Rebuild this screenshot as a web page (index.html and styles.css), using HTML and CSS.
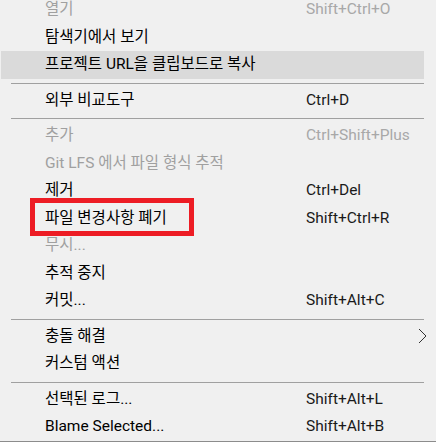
FILE: index.html
```html
<!DOCTYPE html>
<html lang="ko">
<head>
  <meta charset="UTF-8"/>
  <title>Context Menu</title>
  <link rel="stylesheet" href="styles.css">
</head>
<body>
  <div class="menu">
    <div class="item disabled"><span class="label">열기</span><span class="key">Shift+Ctrl+O</span></div>
    <div class="item"><span class="label">탐색기에서 보기</span></div>
    <div class="item active"><span class="label">프로젝트 URL을 클립보드로 복사</span></div>
    <div class="sep"></div>
    <div class="item"><span class="label">외부 비교도구</span><span class="key">Ctrl+D</span></div>
    <div class="sep"></div>
    <div class="item disabled"><span class="label">추가</span><span class="key">Ctrl+Shift+Plus</span></div>
    <div class="item disabled"><span class="label">Git LFS 에서 파일 형식 추적</span></div>
    <div class="item"><span class="label">제거</span><span class="key">Ctrl+Del</span></div>
    <div class="item marked">
      <span class="label">파일 변경사항 폐기</span><span class="key">Shift+Ctrl+R</span>
      <span class="mark"></span>
    </div>
    <div class="item disabled"><span class="label">무시...</span></div>
    <div class="item"><span class="label">추적 중지</span></div>
    <div class="item"><span class="label">커밋...</span><span class="key">Shift+Alt+C</span></div>
    <div class="sep"></div>
    <div class="item">
      <span class="label">충돌 해결</span>
      <svg class="arrow" width="9" height="16" viewBox="0 0 9 16"><path d="M1 1 L8 8 L1 15" fill="none" stroke="#333" stroke-width="1"/></svg>
    </div>
    <div class="item"><span class="label">커스텀 액션</span></div>
    <div class="sep"></div>
    <div class="item"><span class="label">선택된 로그...</span><span class="key">Shift+Alt+L</span></div>
    <div class="item"><span class="label">Blame Selected...</span><span class="key">Shift+Alt+B</span></div>
  </div>
</body>
</html>
```

FILE: styles.css
```css
:root {
  --menu-bg: #f0f0f0;
  --hover-bg: #dadada;
  --sep-color: #a0a0a0;
  --text: #000000;
  --text-off: #a0a0a0;
  --row-h: 27.5px;
}

* { box-sizing: border-box; }

body {
  margin: 0;
  background: #ffffff;
  overflow: hidden;
  font-family: Roboto, "Noto Sans CJK KR", sans-serif;
  font-size: 15.5px;
  color: var(--text);
}

.menu {
  width: 436px;
  margin-top: -4px;
  padding: 0 0 0 1px;
  background: var(--menu-bg);
  border-bottom: 1px solid #8c8c8c;
  box-shadow: 2px 2px 3px rgba(0,0,0,0.3);
}

.item {
  position: relative;
  display: flex;
  align-items: center;
  height: var(--row-h);
  margin-right: 12px;
  padding-left: 44px;
  line-height: 1;
}

.item.active { background: var(--hover-bg); }
.item.disabled { color: var(--text-off); }

.label {
  flex: 0 0 261px;
  white-space: nowrap;
}

.key {
  color: #1a1a1a;
  white-space: nowrap;
}
.item.disabled .key { color: #a8a8a8; }

.arrow {
  margin-left: auto;
  margin-right: -3px;
}

.sep {
  height: 8px;
  margin: 0 12px 0 10px;
  padding-top: 4px;
}
.sep::before {
  content: "";
  display: block;
  height: 1px;
  background: var(--sep-color);
}

.mark {
  position: absolute;
  left: 29px;
  top: -7px;
  width: 164px;
  height: 38px;
  border: 5px solid #ed1c24;
}
```
